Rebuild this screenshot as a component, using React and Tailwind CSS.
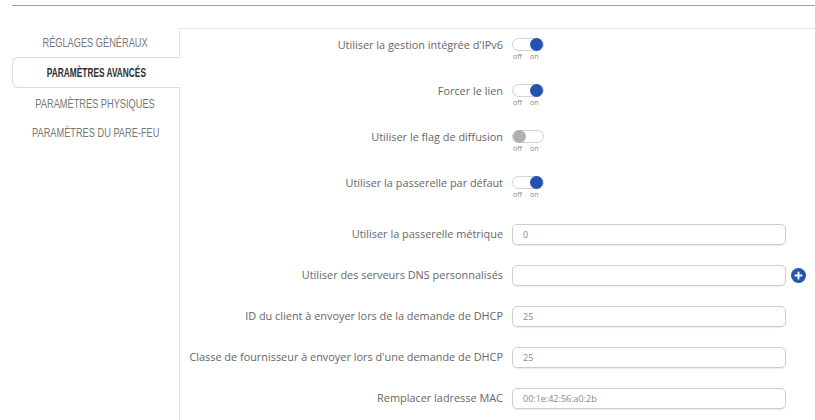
import React from "react";

const tabs = [
  { label: "RÉGLAGES GÉNÉRAUX", h: "h-[29px]" },
  { label: "PARAMÈTRES AVANCÉS", h: "h-[31px]", active: true },
  { label: "PARAMÈTRES PHYSIQUES", h: "h-[31px]" },
  { label: "PARAMÈTRES DU PARE-FEU", h: "h-[28px]" },
];

const toggles = [
  { label: "Utiliser la gestion intégrée d'IPv6", on: true },
  { label: "Forcer le lien", on: true },
  { label: "Utiliser le flag de diffusion", on: false },
  { label: "Utiliser la passerelle par défaut", on: true },
];

const fields = [
  { label: "Utiliser la passerelle métrique", value: "0" },
  { label: "Utiliser des serveurs DNS personnalisés", value: "", plus: true },
  { label: "ID du client à envoyer lors de la demande de DHCP", value: "25" },
  { label: "Classe de fournisseur à envoyer lors d'une demande de DHCP", value: "25" },
  { label: "Remplacer ladresse MAC", value: "00:1e:42:56:a0:2b" },
];

const Toggle = ({ on }) => (
  <div className="flex flex-col">
    <div
      className={
        "w-[32px] h-[13px] rounded-full border border-[#d2d2d2] bg-white flex items-center " +
        (on ? "justify-end" : "justify-start")
      }
    >
      <div
        className={
          "w-[13px] h-[13px] rounded-full " + (on ? "bg-[#2253b3]" : "bg-[#b0b0b0]")
        }
      ></div>
    </div>
    <div className="flex gap-[8px] pl-[1px] mt-[2px] text-[7px] leading-[8px] text-[#888]">
      <span>off</span>
      <span>on</span>
    </div>
  </div>
);

const App = () => {
  return (
    <div
      className="w-[815px] h-[420px] overflow-hidden bg-white"
      style={{ fontFamily: '"Open Sans", "Liberation Sans", sans-serif' }}
    >
      {/* page header rule */}
      <div className="ml-3 mt-[5px] border-t border-[#9c9c9c]"></div>

      <div className="flex mt-[22px]">
        {/* side tabs */}
        <div className="w-[167px] ml-3 flex flex-col">
          {tabs.map((t) => (
            <div
              key={t.label}
              className={
                t.h +
                " flex items-center justify-center " +
                (t.active
                  ? "relative z-10 -mr-px bg-white border border-r-0 border-[#dcdcdc] rounded-l-[6px] text-[#2e2e2e]"
                  : "text-[#777]")
              }
              style={{ fontFamily: '"Liberation Sans", sans-serif' }}
            >
              <span
                className={
                  "inline-block text-[13px] whitespace-nowrap " +
                  (t.active ? "font-bold scale-x-[0.64]" : "scale-x-[0.71]")
                }
              >
                {t.label}
              </span>
            </div>
          ))}
        </div>

        {/* content */}
        <div className="flex-1 h-[400px] border-l border-t border-[#e6e6e6] flex flex-col pt-[9px]">
          {toggles.map((r) => (
            <div key={r.label} className="h-[46px] flex items-start">
              <div className="w-[324px] text-right text-[10.9px] leading-[13px] text-[#666] pr-[1px] whitespace-nowrap">
                {r.label}
              </div>
              <div className="ml-[8px]">
                <Toggle on={r.on} />
              </div>
            </div>
          ))}
          {fields.map((f) => (
            <div key={f.label} className="h-[41px] flex items-start pt-[2px]">
              <div className="w-[324px] h-[21px] flex items-center justify-end text-[10.9px] text-[#666] whitespace-nowrap pr-[1px]">
                {f.label}
              </div>
              <div className="ml-[8px] flex items-center gap-[5px]">
                <div className="w-[274px] h-[21px] rounded-[5px] border border-[#cdcdcd] shadow-[0_1px_1px_rgba(0,0,0,0.08)] flex items-center pl-[10px] text-[9px] text-[#888]">
                  {f.value}
                </div>
                {f.plus && (
                  <div className="w-[15px] h-[15px] rounded-full bg-[#2455b0] flex items-center justify-center">
                    <svg width="9" height="9" viewBox="0 0 10 10">
                      <path d="M5 1.5v7M1.5 5h7" stroke="white" strokeWidth="2" strokeLinecap="round" />
                    </svg>
                  </div>
                )}
              </div>
            </div>
          ))}
        </div>
      </div>
    </div>
  );
};

export default App;
